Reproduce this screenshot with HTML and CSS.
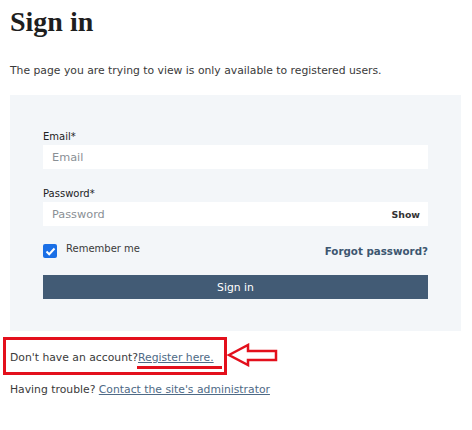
FILE: index.html
```html
<!DOCTYPE html>
<html lang="en">
<head>
    <meta charset="UTF-8">
    <meta name="viewport" content="width=device-width, initial-scale=1.0">
    <title>Sign in</title>
    <link rel="stylesheet" href="styles.css">
</head>
<body>
    <main class="page">
        <h1 class="title">Sign in</h1>
        <p class="intro">The page you are trying to view is only available to registered users.</p>
        <section class="panel">
            <form class="login-form">
                <label class="field-label" for="email">Email*</label>
                <div class="input-box"><input id="email" type="text" placeholder="Email"></div>
                <label class="field-label" for="password">Password*</label>
                <div class="input-box"><input id="password" type="password" placeholder="Password"><span class="show">Show</span></div>
                <div class="options">
                    <label class="remember"><span class="check"><svg width="11" height="9" viewBox="0 0 11 9"><path d="M1.5 4.5 L4.2 7.2 L9.5 1.5" fill="none" stroke="#fff" stroke-width="2"/></svg></span><span class="remember-text">Remember me</span></label>
                    <a class="forgot" href="#">Forgot password?</a>
                </div>
                <button class="submit" type="button">Sign in</button>
            </form>
        </section>
        <div class="register">
            <p class="line">Don't have an account?<a href="#">Register here.</a></p>
            <span class="mark-box"></span>
            <span class="mark-line"></span>
            <svg class="mark-arrow" width="52" height="24" viewBox="0 0 52 24"><path d="M3 12 L22 2 L22 8 L50 8 L50 17 L22 17 L22 22 Z" fill="none" stroke="#e3101c" stroke-width="2.5" stroke-linejoin="miter"/></svg>
        </div>
        <p class="line trouble">Having trouble? <a href="#">Contact the site's administrator</a></p>
    </main>
</body>
</html>
```

FILE: styles.css
```css
body {
    margin: 0;
    font-family: "DejaVu Sans", sans-serif;
    color: #3a3a3a;
    background: #fff;
}
.page {
    padding: 0 10px;
}
.title {
    font-family: "Liberation Serif", serif;
    font-size: 28px;
    font-weight: bold;
    color: #1e1e1e;
    margin: 0;
    padding-top: 5px;
    line-height: 34px;
}
.intro {
    font-size: 10.8px;
    margin: 24px 0 0;
    line-height: 16px;
}
.panel {
    background: #f3f6f9;
    margin: 16px 1px 0 0;
    padding: 35px 33px 32px;
}
.login-form {
    display: flex;
    flex-direction: column;
}
.field-label {
    font-size: 10px;
    color: #222;
    line-height: 14px;
    margin-bottom: 1px;
}
.input-box {
    display: flex;
    align-items: center;
    background: #fff;
    height: 24px;
    margin-bottom: 18px;
}
.input-box input {
    flex: 1;
    border: none;
    outline: none;
    background: transparent;
    font-family: "DejaVu Sans", sans-serif;
    font-size: 11.3px;
    padding: 0 9px;
    min-width: 0;
}
.input-box input::placeholder {
    color: #8a8f95;
}
.show {
    font-size: 9.4px;
    font-weight: bold;
    color: #333;
    padding-right: 8px;
}
.options {
    display: flex;
    justify-content: space-between;
    align-items: center;
    height: 14px;
}
.remember {
    display: flex;
    align-items: center;
    gap: 9px;
    font-size: 10px;
    color: #3a3a3a;
    line-height: 14px;
}
.remember-text {
    margin-top: -4px;
}
.check {
    width: 14px;
    height: 14px;
    border-radius: 2px;
    background: #1a6fe6;
    display: flex;
    align-items: center;
    justify-content: center;
}
.forgot {
    font-size: 10.3px;
    font-weight: bold;
    color: #3d5670;
    text-decoration: none;
}
.submit {
    margin-top: 17px;
    height: 24px;
    border: none;
    background: #425b75;
    color: #fff;
    font-family: "DejaVu Sans", sans-serif;
    font-size: 10.8px;
}
.register {
    position: relative;
    margin-top: 19px;
}
.line {
    font-size: 10.8px;
    line-height: 16px;
    margin: 0;
    color: #3a3a3a;
}
.line a {
    color: #4e6a86;
}
.trouble {
    margin-top: 16px;
}
.mark-box {
    position: absolute;
    left: -7px;
    top: -13px;
    width: 218px;
    height: 32px;
    border: 3px solid #e3101c;
}
.mark-line {
    position: absolute;
    left: 127px;
    top: 16px;
    width: 85px;
    height: 2.5px;
    background: #e3101c;
}
.mark-arrow {
    position: absolute;
    left: 216px;
    top: -7px;
}
```
